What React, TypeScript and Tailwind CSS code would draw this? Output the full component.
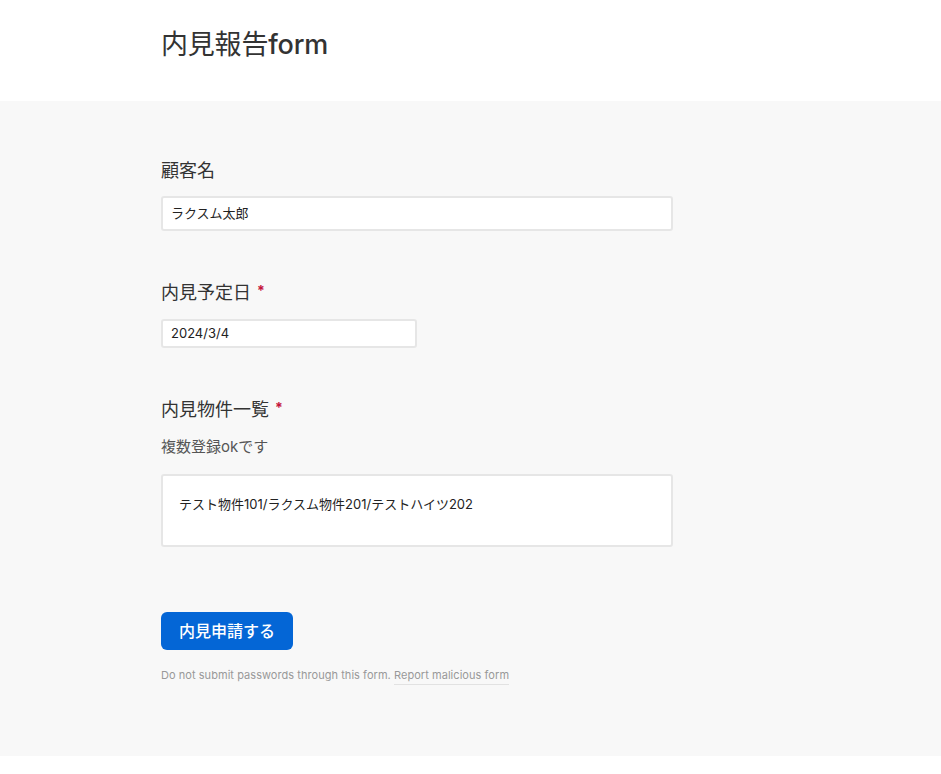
import React from "react";

const font = { fontFamily: '"Inter", "Noto Sans CJK JP", sans-serif' };

function Label({ text, required }: { text: string; required?: boolean }) {
  return (
    <div className="flex items-start h-[26px] text-[18px] leading-[26px] text-[#333]">
      <span>{text}</span>
      {required && (
        <span className="ml-[6px] text-[14px] leading-[22px] text-[#c4133c] font-bold">*</span>
      )}
    </div>
  );
}

export default function App() {
  return (
    <div style={font} className="min-h-[774px] bg-white">
      <header className="h-[101px] bg-white pl-[161px] pt-[27px]">
        <h1 className="text-[27px] leading-[36px] text-[#333] font-normal tracking-[-0.2px]">
          内見報告<span className="font-medium">form</span>
        </h1>
      </header>
      <main className="bg-[#f8f8f8] pl-[161px] pt-[57px] pb-[73px]">
        <Label text="顧客名" />
        <div className="mt-[12px] w-[512px] h-[35px] bg-white border-2 border-[#e6e6e6] rounded-[3px] flex items-center pl-[8px] text-[13px] text-[#222]">
          ラクスム太郎
        </div>

        <div className="mt-[49px]">
          <Label text="内見予定日" required />
        </div>
        <div className="mt-[13px] w-[256px] h-[29px] bg-white border-2 border-[#e6e6e6] rounded-[3px] flex items-center pl-[8px] text-[13px] text-[#222]">
          2024/3/4
        </div>

        <div className="mt-[49px]">
          <Label text="内見物件一覧" required />
        </div>
        <div className="mt-[13px] h-[22px] text-[15px] leading-[22px] text-[#555]">複数登録okです</div>
        <div className="mt-[16px] w-[512px] h-[73px] bg-white border-2 border-[#e6e6e6] rounded-[3px] pl-[16px] pt-[18px] text-[13px] leading-[20px] text-[#222]">
          テスト物件101/ラクスム物件201/テストハイツ202
        </div>

        <button className="mt-[65px] block w-[132px] h-[38px] bg-[#0466d6] rounded-[6px] text-white text-[16px] font-medium leading-[38px] text-center">
          内見申請する
        </button>

        <div className="mt-[17px] h-[16px] text-[11px] leading-[16px] text-[#999] tracking-[0.05px]">
          Do not submit passwords through this form.{" "}
          <span className="border-b border-[#e2e2e2] pb-[2px]">Report malicious form</span>
        </div>
      </main>
    </div>
  );
}
